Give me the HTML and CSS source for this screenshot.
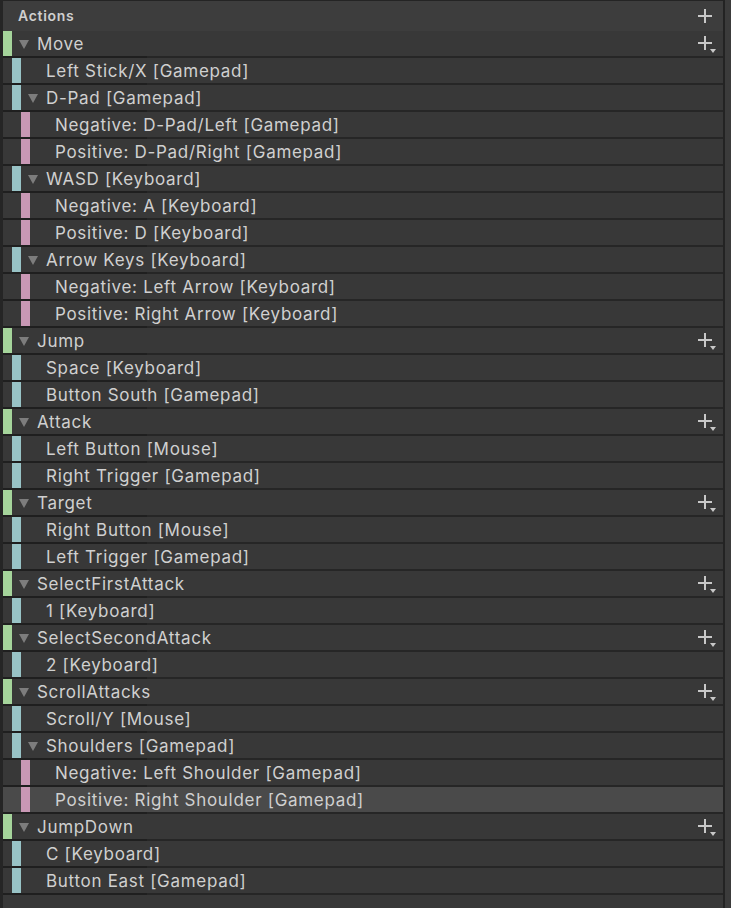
FILE: index.html
```html
<!DOCTYPE html>
<html>
<head>
<meta charset="utf-8">
<link rel="stylesheet" href="styles.css">
</head>
<body>
<div class="panel">
  <div class="main">
    <div class="header">
      <span class="title">Actions</span>
      <svg class="plus" width="14" height="14" viewBox="0 0 14 14"><path d="M7 0V14M0 7H14" stroke="#c8c8c8" stroke-width="2"/></svg>
    </div>
    <div class="list">
      <div class="row d0 fold"><i class="bar green"></i><i class="tri"></i><span>Move</span><svg class="add" width="18" height="18" viewBox="0 0 18 18"><path d="M7 0V14M0 7H14" stroke="#c8c8c8" stroke-width="2"/><path d="M12 13H18L15 17Z" fill="#c8c8c8"/></svg></div>
      <div class="row d1"><i class="bar teal"></i><span>Left Stick/X [Gamepad]</span></div>
      <div class="row d1 fold"><i class="bar teal"></i><i class="tri"></i><span>D-Pad [Gamepad]</span></div>
      <div class="row d2"><i class="bar pink"></i><span>Negative: D-Pad/Left [Gamepad]</span></div>
      <div class="row d2"><i class="bar pink"></i><span>Positive: D-Pad/Right [Gamepad]</span></div>
      <div class="row d1 fold"><i class="bar teal"></i><i class="tri"></i><span>WASD [Keyboard]</span></div>
      <div class="row d2"><i class="bar pink"></i><span>Negative: A [Keyboard]</span></div>
      <div class="row d2"><i class="bar pink"></i><span>Positive: D [Keyboard]</span></div>
      <div class="row d1 fold"><i class="bar teal"></i><i class="tri"></i><span>Arrow Keys [Keyboard]</span></div>
      <div class="row d2"><i class="bar pink"></i><span>Negative: Left Arrow [Keyboard]</span></div>
      <div class="row d2"><i class="bar pink"></i><span>Positive: Right Arrow [Keyboard]</span></div>
      <div class="row d0 fold"><i class="bar green"></i><i class="tri"></i><span>Jump</span><svg class="add" width="18" height="18" viewBox="0 0 18 18"><path d="M7 0V14M0 7H14" stroke="#c8c8c8" stroke-width="2"/><path d="M12 13H18L15 17Z" fill="#c8c8c8"/></svg></div>
      <div class="row d1"><i class="bar teal"></i><span>Space [Keyboard]</span></div>
      <div class="row d1"><i class="bar teal"></i><span>Button South [Gamepad]</span></div>
      <div class="row d0 fold"><i class="bar green"></i><i class="tri"></i><span>Attack</span><svg class="add" width="18" height="18" viewBox="0 0 18 18"><path d="M7 0V14M0 7H14" stroke="#c8c8c8" stroke-width="2"/><path d="M12 13H18L15 17Z" fill="#c8c8c8"/></svg></div>
      <div class="row d1"><i class="bar teal"></i><span>Left Button [Mouse]</span></div>
      <div class="row d1"><i class="bar teal"></i><span>Right Trigger [Gamepad]</span></div>
      <div class="row d0 fold"><i class="bar green"></i><i class="tri"></i><span>Target</span><svg class="add" width="18" height="18" viewBox="0 0 18 18"><path d="M7 0V14M0 7H14" stroke="#c8c8c8" stroke-width="2"/><path d="M12 13H18L15 17Z" fill="#c8c8c8"/></svg></div>
      <div class="row d1"><i class="bar teal"></i><span>Right Button [Mouse]</span></div>
      <div class="row d1"><i class="bar teal"></i><span>Left Trigger [Gamepad]</span></div>
      <div class="row d0 fold"><i class="bar green"></i><i class="tri"></i><span>SelectFirstAttack</span><svg class="add" width="18" height="18" viewBox="0 0 18 18"><path d="M7 0V14M0 7H14" stroke="#c8c8c8" stroke-width="2"/><path d="M12 13H18L15 17Z" fill="#c8c8c8"/></svg></div>
      <div class="row d1"><i class="bar teal"></i><span>1 [Keyboard]</span></div>
      <div class="row d0 fold"><i class="bar green"></i><i class="tri"></i><span>SelectSecondAttack</span><svg class="add" width="18" height="18" viewBox="0 0 18 18"><path d="M7 0V14M0 7H14" stroke="#c8c8c8" stroke-width="2"/><path d="M12 13H18L15 17Z" fill="#c8c8c8"/></svg></div>
      <div class="row d1"><i class="bar teal"></i><span>2 [Keyboard]</span></div>
      <div class="row d0 fold"><i class="bar green"></i><i class="tri"></i><span>ScrollAttacks</span><svg class="add" width="18" height="18" viewBox="0 0 18 18"><path d="M7 0V14M0 7H14" stroke="#c8c8c8" stroke-width="2"/><path d="M12 13H18L15 17Z" fill="#c8c8c8"/></svg></div>
      <div class="row d1"><i class="bar teal"></i><span>Scroll/Y [Mouse]</span></div>
      <div class="row d1 fold"><i class="bar teal"></i><i class="tri"></i><span>Shoulders [Gamepad]</span></div>
      <div class="row d2"><i class="bar pink"></i><span>Negative: Left Shoulder [Gamepad]</span></div>
      <div class="row d2 selected"><i class="bar pink"></i><span>Positive: Right Shoulder [Gamepad]</span></div>
      <div class="row d0 fold"><i class="bar green"></i><i class="tri"></i><span>JumpDown</span><svg class="add" width="18" height="18" viewBox="0 0 18 18"><path d="M7 0V14M0 7H14" stroke="#c8c8c8" stroke-width="2"/><path d="M12 13H18L15 17Z" fill="#c8c8c8"/></svg></div>
      <div class="row d1"><i class="bar teal"></i><span>C [Keyboard]</span></div>
      <div class="row d1"><i class="bar teal"></i><span>Button East [Gamepad]</span></div>
    </div>
  </div>
  <div class="scroll"></div>
</div>
</body>
</html>
```

FILE: styles.css
```css
* { box-sizing: border-box; }
html, body { margin: 0; padding: 0; background: #383838; }
body { font-family: Inter, "Noto Sans", sans-serif; color: #d0d0d0; }

.panel {
  width: 731px;
  height: 908px;
  display: flex;
  background: #383838;
  border-left: 3px solid #252525;
}

.main {
  flex: 1;
  display: flex;
  flex-direction: column;
  border-right: 2px solid #232323;
}

.scroll {
  width: 6px;
  background: #3b3b3b;
}

.header {
  height: 31px;
  border-top: 1px solid #242424;
  background: #3d3d3d;
  display: flex;
  align-items: center;
  justify-content: space-between;
  padding: 0 11px 0 15px;
}
.title {
  font-size: 14px;
  font-weight: 600;
  letter-spacing: 0.7px;
  color: #cfcfcf;
  margin-top: -1px;
}
.plus { display: block; margin-top: -1px; }

.list { display: flex; flex-direction: column; }

.row {
  height: 27px;
  display: flex;
  align-items: center;
  font-size: 17px;
  letter-spacing: 0.7px;
  line-height: 25px;
  border-bottom: 2px solid #262626;
  position: relative;
  background: #383838;
}
.row::after {
  content: "";
  position: absolute;
  left: 0;
  bottom: -2px;
  width: 144px;
  height: 2px;
  background: #1f1f1f;
}
.row span { white-space: nowrap; padding-top: 2px; }

.d0 { padding-left: 0; }
.d1 { padding-left: 9px; }
.d2 { padding-left: 18px; }

.bar {
  display: block;
  width: 9px;
  height: 25px;
  flex: none;
  align-self: flex-start;
}
.green { background: #a5d49b; }
.teal { background: #98c3c6; }
.pink { background: #c998b5; }

.row > span { margin-left: 25px; }
.fold > span { margin-left: 8px; }

.tri {
  display: block;
  flex: none;
  margin-left: 7px;
  width: 0;
  height: 0;
  border-left: 5px solid transparent;
  border-right: 5px solid transparent;
  border-top: 9px solid #7d7d7d;
  margin-top: 2px;
}

.selected { background: #4a4a4a; }

.add {
  display: block;
  flex: none;
  margin-left: auto;
  margin-right: 7px;
  align-self: flex-start;
  margin-top: 5px;
}
```
